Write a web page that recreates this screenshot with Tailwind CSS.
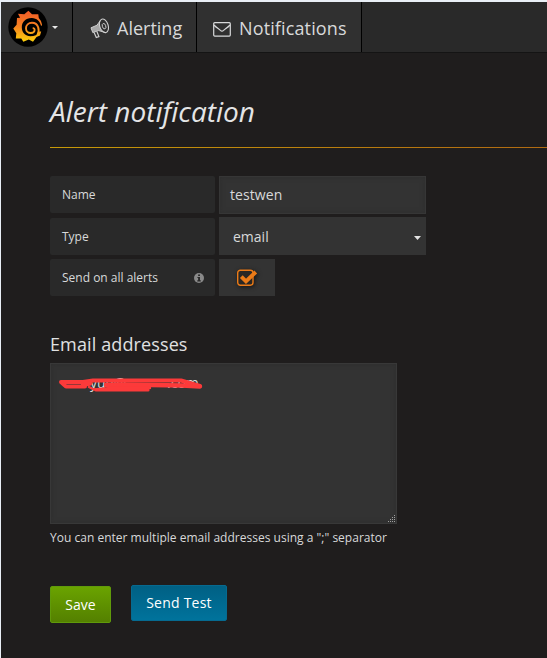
<!DOCTYPE html>
<html lang="en">
<head>
<meta charset="utf-8">
<title>Alert notification</title>
<script src="https://cdn.jsdelivr.net/npm/@tailwindcss/browser@4"></script>
</head>
<body class="bg-[#e9eff6]">
<div class="w-[547px] h-[658px] overflow-hidden pt-[2px] pl-px font-['Open_Sans','Noto_Sans',sans-serif] text-[#d8d9da]">
<div class="h-[656px] bg-[#1f1d1d]">
  <nav class="flex h-[51px] bg-[#292929] border-b border-[#141414] text-[18px]">
    <div class="w-[72px] h-[50px] bg-[#303030] border-r border-black flex items-center pl-[7px]">
      <svg class="w-10 h-10" viewBox="8 7 40 40">
        <defs><linearGradient id="g" gradientUnits="userSpaceOnUse" x1="0" y1="11" x2="0" y2="42"><stop offset="0" stop-color="#f05a28"/><stop offset=".5" stop-color="#f58220"/><stop offset="1" stop-color="#fdd20a"/></linearGradient></defs>
        <circle cx="28" cy="27" r="19.7" fill="#000"/>
        <path fill="url(#g)" d="M28.4 10.8L32 14.2L38.3 14.2L38.8 18.1Q41.2 20.4 42 24.6Q42 26.3 41 25.7C39.8 21.2 36.8 18.4 32 18.1C26 17.8 21.8 22 21.8 27.3C21.8 32.6 25.6 36.2 30.4 36.2C34.6 36.2 37.6 34.8 39.3 31.4L41.2 31.4L40 35.4L36.5 37L33 41.7L28.8 39.6L23.3 41.8L21.3 38.4L15.8 38.4L16.3 33.2L13.3 28.4L16.6 24.8L17 18L20.1 17.8L18 13.8L24.3 14.3Z"/>
        <path fill="none" stroke="url(#g)" stroke-width="1.9" stroke-linecap="round" d="M37.6 34.4C39 32 39 30 38.2 27.4C37.2 24.2 35 22.7 32 22.7C28.4 22.7 26 25.2 26 28.2C26 31.2 28.2 33 30.8 33C33 33 34.6 31.6 34.6 29.8C34.6 28.9 34.1 28.3 33.4 28.1"/>
      </svg>
      <svg class="w-[6px] h-[3px] ml-1" viewBox="0 0 6 3"><path d="M0 0H6L3 3Z" fill="#e8e8e8"/></svg>
    </div>
    <div class="w-[124px] h-[50px] bg-[#303030] border-r border-black flex items-center pl-[17px]">
      <svg class="w-5 h-[21px] mr-[7px] mt-[3px]" viewBox="0 0 20 21" fill="none" stroke="#cfcfcf">
        <ellipse cx="14" cy="7.8" rx="4.2" ry="7" transform="rotate(-18 14 8)" stroke-width="1.1"/>
        <ellipse cx="14" cy="8.2" rx="1.7" ry="2.8" transform="rotate(-18 14 8)" stroke-width=".9"/>
        <path d="M10.4 2.5L7 7.2L1 9.8L2.8 14.6L8.6 12.6L15.4 14.5" stroke-width="1"/>
        <path d="M1 9.8L7 7.2L9.8 4.5L9.8 9L11.6 13.2L8.6 12.6L2.8 14.6Z" fill="#cfcfcf" fill-opacity=".75" stroke="none"/>
        <path d="M4.1 14.6L6.3 19.6L8.9 18.6L7 13.8" stroke-width="1.2"/>
      </svg>
      <span class="mt-[3px]">Alerting</span>
    </div>
    <div class="w-[165px] h-[50px] bg-[#303030] border-r border-black flex items-center pl-4">
      <svg class="w-[18px] h-[15px] mr-2 mt-[4px]" viewBox="0 0 18 15" fill="none" stroke="#d8d9da" stroke-width="1.2"><rect x=".7" y=".7" width="16.6" height="13.4" rx="1"/><path d="M1 3C3 5.3 6 7 7.4 8.4Q9 9.8 10.6 8.4C12 7 15 5.3 17 3"/></svg>
      <span class="mt-[3px] tracking-[.13px]">Notifications</span>
    </div>
  </nav>
  <main class="pl-[49px]">
    <h1 class="h-[95px] pt-[39px] text-[28px] leading-[38px] italic text-[#e4e5e6] border-b border-transparent [border-image:linear-gradient(to_right,#c79a08,#b06a12)_1]">Alert notification</h1>
    <form class="pt-7 text-[12px]">
      <div class="flex gap-1 h-[41px]">
        <label class="w-[165px] h-[37px] pl-3 bg-[#292929] rounded-[2px] flex items-center">Name</label>
        <div class="w-[207px] h-[38px] pl-[10px] pb-[2px] bg-[#333] border border-[#363636] shadow-[inset_0_0_5px_#2e2e2e] flex items-center text-[14px] tracking-[.08px]">testwen</div>
      </div>
      <div class="flex gap-1 h-[41px]">
        <label class="w-[165px] h-[37px] mt-px pl-3 bg-[#292929] rounded-[2px] flex items-center">Type</label>
        <div class="w-[207px] h-[38px] pl-[14px] pr-[5px] bg-[#333] flex items-center justify-between text-[14px]"><span>email</span><svg class="w-[7px] h-1 mt-1" viewBox="0 0 7 4"><path d="M0 0H7L3.5 4Z" fill="#e3e3e3"/></svg></div>
      </div>
      <div class="flex gap-1 h-[38px] pt-px">
        <div class="w-[165px] h-[37px] pl-3 pr-[11px] bg-[#292929] rounded-[2px] flex items-center justify-between"><span>Send on all alerts</span>
          <svg class="w-[10px] h-[10px] mt-[1px]" viewBox="0 0 10 10"><circle cx="5" cy="5" r="5" fill="#898989"/><path d="M4.1 1.4H6V3H4.1ZM3.4 4H6V7.3H6.8V8.4H3.3V7.3H4.1V5H3.4Z" fill="#292929"/></svg></div>
        <div class="w-[56px] h-[37px] bg-[#333] pl-[18px] flex items-center">
          <svg class="w-5 h-[17px] drop-shadow-[1px_1px_2px_#151515] overflow-visible" viewBox="0 0 20 17"><rect x=".7" y="1.2" width="15.3" height="15" rx="2.6" fill="#2a2724" stroke="#eb7b18" stroke-width="1.4"/><path d="M4.3 7.6L9 12.3L18.8 3" fill="none" stroke="#eb7b18" stroke-width="3.9"/></svg></div>
      </div>
      <h2 class="mt-[35px] text-[18px] leading-[26px] tracking-[.12px] text-[#e0e1e2]">Email addresses</h2>
      <div class="relative mt-[6px] w-[347px] h-[161px] bg-[#333] border border-[#383838] shadow-[inset_0_0_5px_#2e2e2e] pl-[11px] pt-[9px] text-[14px] leading-5">
        <span class="pl-[28px]">yue@</span><span class="pl-[41px]">.com</span>
        <svg class="absolute left-0 top-0 w-[160px] h-[36px]" viewBox="51 364 160 36" fill="none" stroke="#fc3a3a" stroke-linecap="round" stroke-linejoin="round"><path d="M61 382L83 382L93 380.5L118 380.5L181 380.5L188 382.5L200 386" stroke-width="4"/><path d="M62 383L66 386.5L85 386.5" stroke-width="4"/><path d="M83 384.5L90 383.5M106 385L120 384.5L182 385.5L200 386.5" stroke-width="4.4"/><path d="M89 387L94 389.5L111 388L150 388" stroke-width="2.4"/><path d="M96 390L148 390" stroke-width="3.2"/></svg>
        <svg class="absolute right-0 bottom-0 w-2 h-2" viewBox="0 0 8 8" fill="#a0a0a0"><path d="M6 0h1v1h-1zM4 2h1v1h-1zM6 2h1v1h-1zM2 4h1v1h-1zM4 4h1v1h-1zM6 4h1v1h-1zM0 6h1v1h-1zM2 6h1v1h-1zM4 6h1v1h-1zM6 6h1v1h-1z"/></svg>
      </div>
      <p class="mt-1 leading-5 tracking-[.01px]">You can enter multiple email addresses using a ";" separator</p>
      <div class="flex gap-5 mt-[37px] text-[14px] text-white [text-shadow:0_1px_1px_#0005]">
        <button type="button" class="w-[61px] h-[37px] mt-px rounded-[2px] border border-[#609a0a] bg-linear-to-b from-[#6aa300] to-[#548000]">Save</button>
        <button type="button" class="w-[96px] h-[36px] pb-[2px] tracking-[.22px] rounded-[2px] border border-[#066a90] bg-linear-to-b from-[#006084] to-[#00739c]">Send Test</button>
      </div>
    </form>
  </main>
</div>
</div>
</body>
</html>
